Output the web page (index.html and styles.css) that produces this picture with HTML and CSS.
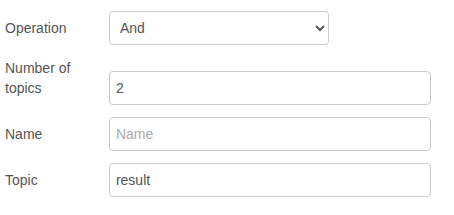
FILE: index.html
```html
<!DOCTYPE html>
<html>
<head>
<meta charset="utf-8">
<link rel="stylesheet" href="styles.css">
</head>
<body>
<div class="form">
  <div class="form-row form-row-first">
    <label class="lbl" for="op">Operation</label>
    <select id="op" class="sel"><option>And</option><option>Or</option></select>
  </div>
  <div class="form-row">
    <label class="lbl" for="num">Number of topics</label>
    <input id="num" class="inp" type="text" value="2">
  </div>
  <div class="form-row">
    <label class="lbl" for="name">Name</label>
    <input id="name" class="inp" type="text" placeholder="Name">
  </div>
  <div class="form-row">
    <label class="lbl" for="topic">Topic</label>
    <input id="topic" class="inp" type="text" value="result">
  </div>
</div>
</body>
</html>
```

FILE: styles.css
```css
html, body {
  margin: 0;
  padding: 0;
  background: #fff;
}
body {
  font-family: "Liberation Sans", Arial, sans-serif;
  font-size: 14px;
  line-height: 20px;
  color: #555;
}
.form {
  padding: 11px 5px 0 5px;
}
.form-row {
  margin-bottom: 12px;
}
.form-row-first {
  margin-bottom: 13px;
}
.lbl {
  display: inline-block;
  width: 100px;
  vertical-align: baseline;
  color: #555;
}
.sel, .inp {
  display: inline-block;
  box-sizing: border-box;
  height: 34px;
  font-family: "Liberation Sans", Arial, sans-serif;
  font-size: 14px;
  line-height: 20px;
  color: #555;
  background: #fff;
  border: 1px solid #ccc;
  border-radius: 4px;
  vertical-align: baseline;
  margin: 0;
}
.sel {
  width: 220px;
  padding: 6px 6px 6px 6px;
}
.inp {
  width: 322px;
  padding: 6px;
  outline: none;
}
.inp::placeholder {
  color: #aaa;
}
```
